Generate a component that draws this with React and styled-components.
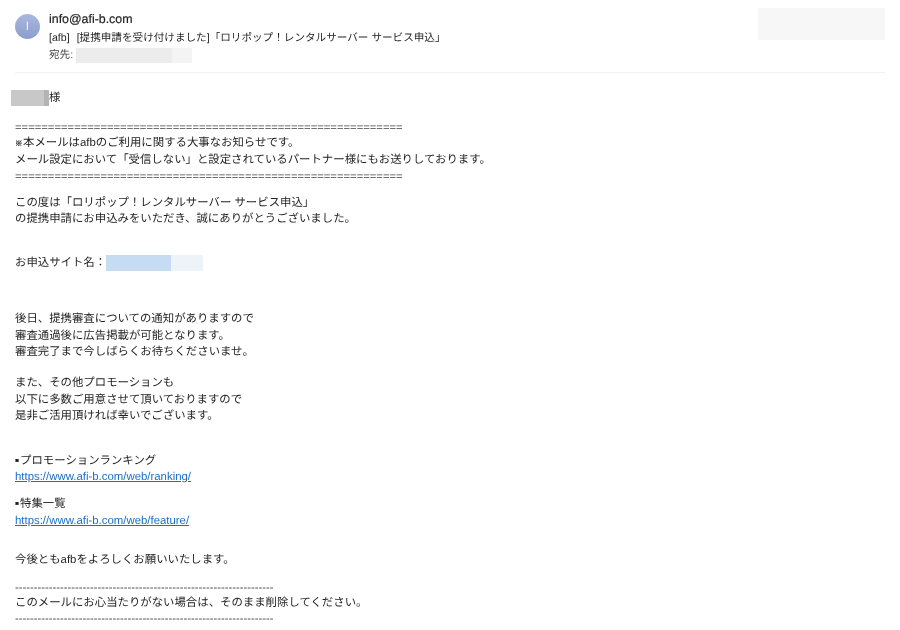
import React from 'react';
import styled, { createGlobalStyle } from 'styled-components';

const GlobalStyle = createGlobalStyle`
  html, body {
    margin: 0;
    padding: 0;
    background: #fff;
  }
  body {
    font-family: "Liberation Sans", "Noto Sans CJK JP", sans-serif;
    color: #1f1f1f;
    text-rendering: geometricPrecision;
  }
`;

const Page = styled.div`
  width: 900px;
  height: 630px;
  overflow: hidden;
  box-sizing: border-box;
  filter: blur(0.4px);
`;

const Header = styled.header`
  display: flex;
  margin: 0 15px;
  height: 73px;
  box-sizing: border-box;
  border-bottom: 1px solid #f1f1f1;
  padding-top: 13px;
`;

const Avatar = styled.div`
  width: 25px;
  height: 25px;
  margin-top: 1px;
  border-radius: 50%;
  background: linear-gradient(#a9b8de, #8b9dcb);
  color: #eef1f8;
  font-size: 12px;
  line-height: 25px;
  text-align: center;
  flex: none;
`;

const Meta = styled.div`
  flex: 1;
  margin-left: 9px;
  font-size: 10.6px;
`;

const Sender = styled.div`
  font-size: 12.4px;
  -webkit-text-stroke: 0.2px #1f1f1f;
  line-height: 14px;
  height: 14px;
  margin-top: -1px;
`;

const Subject = styled.div`
  line-height: 17px;
  margin-top: 4px;
`;

const SubjectTitle = styled.span`
  margin-left: 7px;
`;

const Recipient = styled.div`
  display: flex;
  align-items: center;
  line-height: 17px;
  color: #444;
`;

const Redacted = styled.span`
  display: inline-block;
  width: ${(p) => p.$w}px;
  height: ${(p) => p.$h}px;
  background: ${(p) => p.$bg};
`;

const RecipientMask = styled(Redacted)`
  margin-left: 3px;
`;

const Stamp = styled(Redacted)`
  flex: none;
  margin-top: -5px;
`;

const Body = styled.main`
  padding: 17px 15px 0;
  font-size: 11.4px;
  line-height: 16.4px;
`;

const Greeting = styled.div`
  display: flex;
  align-items: center;
  margin-left: -4px;
`;

const Block = styled.section`
  margin-top: ${(p) => p.$gap}px;
`;

const Rule = styled.div`
  white-space: nowrap;
  font-size: 11.25px;
  height: ${(p) => p.$h || 16.4}px;
  color: #444;
`;

const Line = styled.div`
  white-space: nowrap;
`;

const Mark = styled.span`
  font-size: 7.5px;
  margin-right: 0.5px;
  -webkit-text-stroke: 0.2px #1f1f1f;
`;

const Bullet = styled.span`
  margin-right: 1px;
  -webkit-text-stroke: 0.3px #1f1f1f;
`;

const SiteRow = styled.div`
  display: flex;
  align-items: center;
`;

const SiteMask = styled.span`
  display: inline-block;
  width: 97px;
  height: 16px;
  background: linear-gradient(90deg, #c5dcf2 0 67%, #eef3f7 67% 100%);
`;

const MailLink = styled.a`
  display: block;
  color: #1a6fc4;
  text-decoration: underline;
`;

const equals = '='.repeat(59);
const dashes = '-'.repeat(69);

export default function App() {
  return (
    <Page>
      <GlobalStyle />
      <Header>
        <Avatar>I</Avatar>
        <Meta>
          <Sender>info@afi-b.com</Sender>
          <Subject>
            [afb]
            <SubjectTitle>[提携申請を受け付けました]「ロリポップ！レンタルサーバー サービス申込」</SubjectTitle>
          </Subject>
          <Recipient>
            宛先:
            <RecipientMask $w={116} $h={15} $bg="linear-gradient(90deg, #ececec 0 83%, #f4f4f4 83% 100%)" />
          </Recipient>
        </Meta>
        <Stamp $w={127} $h={32} $bg="#f7f7f7" />
      </Header>

      <Body>
        <Greeting>
          <Redacted $w={38} $h={16} $bg="linear-gradient(90deg, #c8c8c8 0 88%, #b4b4b4 88% 100%)" />
          様
        </Greeting>

        <Block $gap={14}>
          <Rule $h={14.4}>{equals}</Rule>
          <Line><Mark>※</Mark>本メールはafbのご利用に関する大事なお知らせです。</Line>
          <Line>メール設定において「受信しない」と設定されているパートナー様にもお送りしております。</Line>
          <Rule $h={15.4}>{equals}</Rule>
        </Block>

        <Block $gap={11}>
          <Line>この度は「ロリポップ！レンタルサーバー サービス申込」</Line>
          <Line>の提携申請にお申込みをいただき、誠にありがとうございました。</Line>
        </Block>

        <Block $gap={27}>
          <SiteRow>
            お申込サイト名：
            <SiteMask />
          </SiteRow>
        </Block>

        <Block $gap={40}>
          <Line>後日、提携審査についての通知がありますので</Line>
          <Line>審査通過後に広告掲載が可能となります。</Line>
          <Line>審査完了まで今しばらくお待ちくださいませ。</Line>
        </Block>

        <Block $gap={15}>
          <Line>また、その他プロモーションも</Line>
          <Line>以下に多数ご用意させて頂いておりますので</Line>
          <Line>是非ご活用頂ければ幸いでございます。</Line>
        </Block>

        <Block $gap={28}>
          <Line><Bullet>▪</Bullet>プロモーションランキング</Line>
          <MailLink href="#">https://www.afi-b.com/web/ranking/</MailLink>
        </Block>

        <Block $gap={11}>
          <Line><Bullet>▪</Bullet>特集一覧</Line>
          <MailLink href="#">https://www.afi-b.com/web/feature/</MailLink>
        </Block>

        <Block $gap={23}>
          <Line>今後ともafbをよろしくお願いいたします。</Line>
        </Block>

        <Block $gap={11}>
          <Rule $h={15.4}>{dashes}</Rule>
          <Line>このメールにお心当たりがない場合は、そのまま削除してください。</Line>
          <Rule>{dashes}</Rule>
        </Block>
      </Body>
    </Page>
  );
}
